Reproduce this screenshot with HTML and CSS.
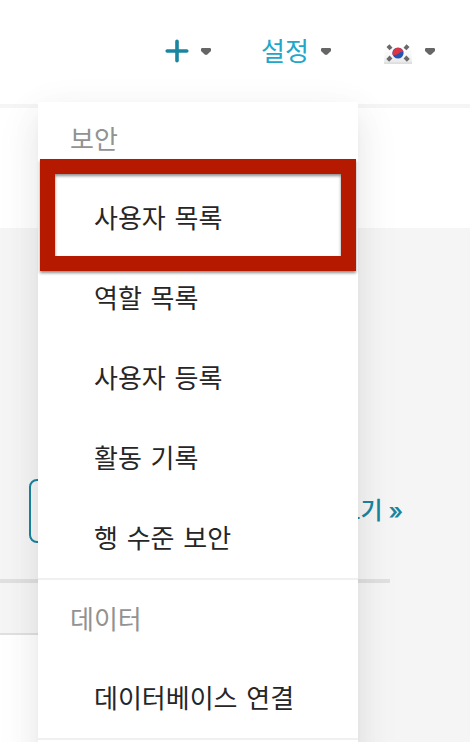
FILE: index.html
```html
<!DOCTYPE html>
<html lang="ko">
<head>
<meta charset="utf-8">
<title>설정</title>
<link rel="stylesheet" href="styles.css">
</head>
<body>
<div class="app">
  <header class="navbar">
    <div class="nav-item nav-add">
      <svg class="plus" viewBox="0 0 24 24"><path d="M12 2.200v19.600M2.200 12h19.600"/></svg>
      <svg class="caret" viewBox="0 0 10 7"><path d="M.7 0h8.600L10 1v2.100L6.300 6.500Q5 7.400 3.700 6.500L0 3.100V1z"/></svg>
    </div>
    <div class="nav-item nav-settings">
      <span class="nav-label">설정</span>
      <svg class="caret" viewBox="0 0 10 7"><path d="M.7 0h8.600L10 1v2.100L6.300 6.500Q5 7.400 3.700 6.500L0 3.100V1z"/></svg>
    </div>
    <div class="nav-item nav-lang">
      <svg class="flag" viewBox="0 0 28 20">
        <defs>
          <linearGradient id="cloth" x2="0" y2="1"><stop offset="0" stop-color="#fff"/><stop offset=".55" stop-color="#f8f8f8"/><stop offset="1" stop-color="#e6e6e6"/></linearGradient>
          <filter id="soft" x="-20%" y="-20%" width="140%" height="140%"><feGaussianBlur stdDeviation=".7"/></filter>
        </defs>
        <path fill="url(#cloth)" d="M1 1h26l1 18.500H0z"/>
        <path stroke="#d6d6d6" d="M0 19.200h28"/>
        <g filter="url(#soft)" stroke="#6a6a6a" stroke-width="4">
          <path d="M4 1.600l3 3.400M24 1.600l-3 3.400M3.700 16.300l3.300-3.300M24.300 16.300l-3.300-3.300"/>
        </g>
        <circle cx="14" cy="9" r="5.600" fill="#2355b5"/>
        <path fill="#df3543" d="M8.700 11A5.600 5.600 0 1 1 19.500 8Q17 7.300 14.500 9.400T8.700 11z"/>
      </svg>
      <svg class="caret" viewBox="0 0 10 7"><path d="M.7 0h8.600L10 1v2.100L6.300 6.500Q5 7.400 3.700 6.500L0 3.100V1z"/></svg>
    </div>
  </header>
  <div class="subheader"></div>
  <main class="content">
    <div class="toolbar">
      <div class="button"></div>
      <div class="more">보기 <span class="more-arrow">»</span></div>
    </div>
    <div class="rule"></div>
    <div class="card"></div>
  </main>
  <div class="menu">
    <div class="group-title">보안</div>
    <div class="item">사용자 목록</div>
    <div class="item">역할 목록</div>
    <div class="item">사용자 등록</div>
    <div class="item">활동 기록</div>
    <div class="item">행 수준 보안</div>
    <div class="divider"></div>
    <div class="group-title">데이터</div>
    <div class="item">데이터베이스 연결</div>
    <div class="divider"></div>
    <div class="highlight"></div>
  </div>
</div>
</body>
</html>
```
FILE: styles.css
```css
* { box-sizing: border-box; }
body {
  margin: 0;
  font-family: "Noto Sans CJK KR", sans-serif;
  font-size: 26px;
}
.app {
  position: relative;
  display: flex;
  flex-direction: column;
  width: 470px;
  height: 742px;
  overflow: hidden;
  background: #fff;
}
.navbar {
  display: flex;
  justify-content: flex-end;
  gap: 50px;
  height: 108px;
  padding: 26px 35px 28px 0;
  border-bottom: 4px solid #f5f5f5;
}
.nav-item { display: flex; align-items: center; }
.nav-add { gap: 12px; }
.nav-settings { gap: 11px; }
.nav-lang { gap: 13px; margin-left: 3px; }
.nav-label {
  color: #20a7c9;
  line-height: 46px;
  margin-bottom: 2px;
  width: 49px;
  white-space: nowrap;
}
.plus { width: 24px; height: 24px; fill: none; stroke: #1985a0; stroke-width: 3.6; stroke-linecap: round; }
.caret { width: 10px; height: 7px; fill: #666; }
.flag { width: 28px; height: 20px; margin-top: 5px; }
.subheader { height: 120px; }
.content { flex: 1; padding-top: 251px; background: #f5f5f5; }
.toolbar {
  display: flex;
  justify-content: space-between;
  width: 403px;
  height: 64px;
  padding-left: 29px;
}
.button { width: 180px; border: 2px solid #1985a0; border-radius: 8px; }
.more { color: #1985a0; font-size: 24px; font-weight: 500; line-height: 60px; white-space: nowrap; }
.more-arrow { font-family: Inter, sans-serif; font-weight: 600; font-size: 23px; margin-left: -1px; }
.rule { width: 390px; height: 4px; margin-top: 36px; background: #e0e0e0; }
.card { width: 300px; height: 109px; margin-top: 50px; border-top: 2px solid #e0e0e0; background: #fff; }
.menu {
  position: absolute;
  top: 102px;
  left: 38px;
  width: 320px;
  height: 760px;
  background: #fff;
  color: #262626;
  word-spacing: 1.5px;
  box-shadow: 0 6px 12px -8px rgba(0,0,0,.12), 0 12px 32px rgba(0,0,0,.08), 0 14px 48px 8px rgba(0,0,0,.03);
}
.group-title { height: 75px; padding-left: 32px; line-height: 72px; color: #929292; }
.item { height: 80px; padding-left: 56px; line-height: 80px; white-space: nowrap; }
.divider { height: 2px; margin-top: -1px; background: #f0f0f0; }
.item + .divider { transform: translateY(2px); }
.divider + .group-title { height: 79px; line-height: 80px; }
.highlight {
  position: absolute;
  top: 57px;
  left: 2px;
  width: 316px;
  height: 112px;
  border: 15px solid #b51a00;
  filter: drop-shadow(0 2px 1.5px rgba(0,0,0,.45));
}
```
